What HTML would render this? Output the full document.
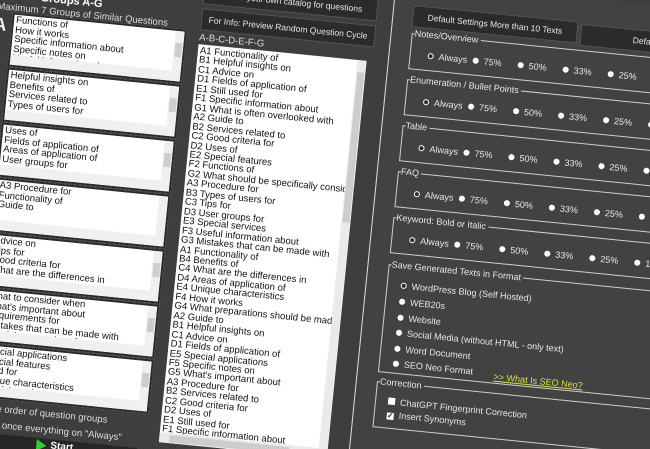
<!DOCTYPE html>
<html><head><meta charset="utf-8"><style>
html,body{margin:0;padding:0;width:650px;height:449px;overflow:hidden;background:#3e3e3e;font-family:"Liberation Sans",sans-serif;}
#clip{position:relative;width:650px;height:449px;overflow:hidden;}
#w{position:absolute;left:0;top:0;width:900px;height:600px;transform-origin:0 0;transform:matrix(1,0.1,-0.1,1,0,0);}
.a{position:absolute;}
.box{position:absolute;left:14px;width:170px;height:50px;background:#fff;border:2px solid #2a2a2a;overflow:hidden;color:#111;font-size:9.5px;line-height:9.6px;}
.box .t{position:absolute;left:2px;top:1px;white-space:nowrap;}
.box .vs{position:absolute;right:0;top:0;width:9px;bottom:10px;background:#f0f0f0;}
.box .vs i{position:absolute;left:1px;top:12px;width:7px;height:14px;background:#cdcdcd;}
.box .hs{position:absolute;left:0;right:0;bottom:0;height:10px;background:#f0f0f0;}
.btn{position:absolute;background:#2b2b2b;border:1px solid #555;color:#e6e6e6;font-size:8.5px;text-align:center;line-height:20px;height:20px;white-space:nowrap;}
.grp{position:absolute;left:411px;width:300px;border:1px solid #cfcfcf;height:34px;}
.grp .lb{position:absolute;left:2px;top:-6px;background:#424242;color:#e8e8e8;font-size:9px;line-height:11px;padding-right:2px;}
.r{position:absolute;color:#e8e8e8;font-size:9px;white-space:nowrap;line-height:10px;}
.r b{display:inline-block;width:6px;height:6px;border-radius:50%;background:#fff;margin-right:5px;vertical-align:0;}
.r b.o{background:#2a2a2a;border:1.5px solid #fff;width:4px;height:4px;}
.lst{position:absolute;left:201px;top:24px;width:168px;height:398px;background:#fff;overflow:hidden;color:#111;font-size:9.5px;line-height:9.45px;}
.lw{color:#ddd;font-size:9px;white-space:nowrap;position:absolute;}
</style></head><body><div id="clip">
<div id="w">
 <div class="a" style="left:390px;top:-60px;width:500px;height:520px;background:#424242;border-left:1.5px solid #ddd;"></div>
 <div class="lw" style="left:40px;top:-12px;font-weight:bold;font-size:11px;color:#fff">Groups A-G</div>
 <div class="lw" style="left:-2px;top:1px;font-size:9.5px">Maximum 7 Groups of Similar Questions</div>
 <div class="lw" style="left:-4px;top:14px;font-size:18px;font-weight:bold;color:#eee">A</div>
 <div class="box" style="top:11px"><div class="t">Functions of<br>How it works<br>Specific information about<br>Specific notes on<br>Useful information about</div><div class="vs"><i></i></div><div class="hs"></div></div>
 <div class="box" style="top:66px"><div class="t">Helpful insights on<br>Benefits of<br>Services related to<br>Types of users for</div><div class="vs"><i></i></div><div class="hs"></div></div>
 <div class="box" style="top:121px"><div class="t">Uses of<br>Fields of application of<br>Areas of application of<br>User groups for</div><div class="vs"><i></i></div><div class="hs"></div></div>
 <div class="box" style="top:176px"><div class="t">A3 Procedure for<br>Functionality of<br>Guide to</div><div class="vs"></div><div class="hs"></div></div>
 <div class="box" style="top:231px"><div class="t">Advice on<br>Tips for<br>Good criteria for<br>What are the differences in</div><div class="vs"><i></i></div><div class="hs"></div></div>
 <div class="box" style="top:286px"><div class="t">What to consider when<br>What's important about<br>Requirements for<br>Mistakes that can be made with<br>Special preparations for</div><div class="vs"><i></i></div><div class="hs"></div></div>
 <div class="box" style="top:341px"><div class="t">Special applications<br>Special features<br>Used for<br>Unique characteristics<br>Special services</div><div class="vs"><i></i></div><div class="hs"></div></div>
 <div class="lw" style="left:-3px;top:400px;font-size:9.5px">Shuffle the order of question groups</div>
 <div class="lw" style="left:-3px;top:416px;font-size:9.5px">Save texts once everything on "Always"</div>
 <div class="a" style="left:10px;top:430px;width:170px;height:30px;background:#262626;"></div>
 <div class="a" style="left:80px;top:431px;width:0;height:0;border-left:10px solid #3c3;border-top:6px solid transparent;border-bottom:6px solid transparent;"></div>
 <div class="lw" style="left:94px;top:431px;font-size:10px;font-weight:bold;color:#fff">Start</div>
 <div class="btn" style="left:201px;top:-38px;width:172px;">Create your own catalog for questions</div>
 <div class="btn" style="left:201px;top:-12px;width:172px;">For Info: Preview Random Question Cycle</div>
 <div class="lw" style="left:201px;top:12px;font-size:9.5px">A-B-C-D-E-F-G</div>
 <div class="lst"><div style="position:absolute;left:2px;top:2px;white-space:nowrap">A1 Functionality of<br>B1 Helpful insights on<br>C1 Advice on<br>D1 Fields of application of<br>E1 Still used for<br>F1 Specific information about<br>G1 What is often overlooked with<br>A2 Guide to<br>B2 Services related to<br>C2 Good criteria for<br>D2 Uses of<br>E2 Special features<br>F2 Functions of<br>G2 What should be specifically considered w<br>A3 Procedure for<br>B3 Types of users for<br>C3 Tips for<br>D3 User groups for<br>E3 Special services<br>F3 Useful information about<br>G3 Mistakes that can be made with<br>A1 Functionality of<br>B4 Benefits of<br>C4 What are the differences in<br>D4 Areas of application of<br>E4 Unique characteristics<br>F4 How it works<br>G4 What preparations should be made for<br>A2 Guide to<br>B1 Helpful insights on<br>C1 Advice on<br>D1 Fields of application of<br>E5 Special applications<br>F5 Specific notes on<br>G5 What's important about<br>A3 Procedure for<br>B2 Services related to<br>C2 Good criteria for<br>D2 Uses of<br>E1 Still used for<br>F1 Specific information about</div>
  <div class="a" style="right:0;top:0;width:9px;bottom:0;background:#eaeaea"><div class="a" style="left:1px;top:12px;width:7px;height:150px;background:#cdcdcd"></div></div>
  <div class="a" style="left:0;right:9px;bottom:0;height:10px;background:#eaeaea"><div class="a" style="left:10px;top:2px;width:120px;height:7px;background:#cdcdcd"></div></div>
 </div>
 <div class="btn" style="left:410px;top:-36px;width:163px;">Default Settings More than 10 Texts</div>
 <div class="btn" style="left:578px;top:-34px;width:163px;">Default Settings</div>
 <div class="grp" style="top:-8px"><span class="lb">Notes/Overview</span></div>
 <div class="grp" style="top:38px"><span class="lb">Enumeration / Bullet Points</span></div>
 <div class="grp" style="top:84px"><span class="lb">Table</span></div>
 <div class="grp" style="top:130px"><span class="lb">FAQ</span></div>
 <div class="grp" style="top:176px"><span class="lb">Keyword: Bold or Italic</span></div>
 <div class="grp" style="top:223px;height:106px"><span class="lb">Save Generated Texts in Format</span></div>
 <div class="r" style="left:425px;top:238px"><b class="o"></b>WordPress Blog (Self Hosted)</div>
 <div class="r" style="left:425px;top:254px"><b></b>WEB20s</div>
 <div class="r" style="left:425px;top:270px"><b></b>Website</div>
 <div class="r" style="left:425px;top:285px"><b></b>Social Media (without HTML - only text)</div>
 <div class="r" style="left:425px;top:301px"><b></b>Word Document</div>
 <div class="r" style="left:425px;top:316px"><b></b>SEO Neo Format</div>
 <div class="r" style="left:526px;top:319px;color:#d6e04a;text-decoration:underline">&gt;&gt; What Is SEO Neo?</div>
 <div class="grp" style="top:340px;height:44px"><span class="lb">Correction</span></div>
 <div class="r" style="left:424px;top:354px"><b style="border-radius:0;width:7px;height:7px"></b>ChatGPT Fingerprint Correction</div>
 <div class="r" style="left:424px;top:367px"><b style="border-radius:0;width:7px;height:7px;background:#fff;color:#000;font-size:7px;line-height:7px;text-align:center">✓</b>Insert Synonyms</div>
 <div class="r" style="left:429px;top:8px"><b class="o"></b>Always</div><div class="r" style="left:474px;top:8px"><b></b>75%</div><div class="r" style="left:519px;top:8px"><b></b>50%</div><div class="r" style="left:564px;top:8px"><b></b>33%</div><div class="r" style="left:609px;top:8px"><b></b>25%</div><div class="r" style="left:654px;top:8px"><b></b>10%</div>
 <div class="r" style="left:429px;top:54px"><b class="o"></b>Always</div><div class="r" style="left:474px;top:54px"><b></b>75%</div><div class="r" style="left:519px;top:54px"><b></b>50%</div><div class="r" style="left:564px;top:54px"><b></b>33%</div><div class="r" style="left:609px;top:54px"><b></b>25%</div><div class="r" style="left:654px;top:54px"><b></b>10%</div>
 <div class="r" style="left:429px;top:100px"><b class="o"></b>Always</div><div class="r" style="left:474px;top:100px"><b></b>75%</div><div class="r" style="left:519px;top:100px"><b></b>50%</div><div class="r" style="left:564px;top:100px"><b></b>33%</div><div class="r" style="left:609px;top:100px"><b></b>25%</div><div class="r" style="left:654px;top:100px"><b></b>10%</div>
 <div class="r" style="left:429px;top:146px"><b class="o"></b>Always</div><div class="r" style="left:474px;top:146px"><b></b>75%</div><div class="r" style="left:519px;top:146px"><b></b>50%</div><div class="r" style="left:564px;top:146px"><b></b>33%</div><div class="r" style="left:609px;top:146px"><b></b>25%</div><div class="r" style="left:654px;top:146px"><b></b>10%</div>
 <div class="r" style="left:429px;top:192px"><b class="o"></b>Always</div><div class="r" style="left:474px;top:192px"><b></b>75%</div><div class="r" style="left:519px;top:192px"><b></b>50%</div><div class="r" style="left:564px;top:192px"><b></b>33%</div><div class="r" style="left:609px;top:192px"><b></b>25%</div><div class="r" style="left:654px;top:192px"><b></b>10%</div>
</div>
</div></body></html>
